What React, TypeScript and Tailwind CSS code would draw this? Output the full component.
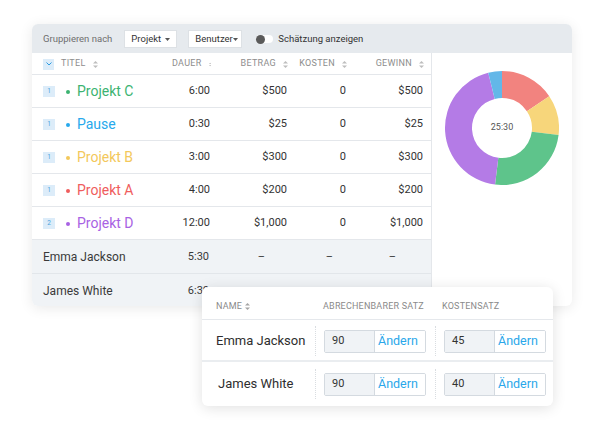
import React from "react";

const font = { fontFamily: "Roboto, 'Liberation Sans', sans-serif" };

type Project = { id: number; name: string; color: string; time: string; amount: string; cost: string; profit: string };

const projects: Project[] = [
  { id: 1, name: "Projekt C", color: "text-[#3cb371]", time: "6:00", amount: "$500", cost: "0", profit: "$500" },
  { id: 1, name: "Pause", color: "text-[#27a9ec]", time: "0:30", amount: "$25", cost: "0", profit: "$25" },
  { id: 1, name: "Projekt B", color: "text-[#f3c85b]", time: "3:00", amount: "$300", cost: "0", profit: "$300" },
  { id: 1, name: "Projekt A", color: "text-[#ef5d5d]", time: "4:00", amount: "$200", cost: "0", profit: "$200" },
  { id: 2, name: "Projekt D", color: "text-[#a862e3]", time: "12:00", amount: "$1,000", cost: "0", profit: "$1,000" },
];

const dotColors = ["bg-[#3cb371]", "bg-[#27a9ec]", "bg-[#f3c85b]", "bg-[#ef5d5d]", "bg-[#a862e3]"];

const people = [
  { name: "Emma Jackson", time: "5:30" },
  { name: "James White", time: "6:30" },
];

const slices = [
  { from: 0, to: 56, color: "#f2837f" },
  { from: 56, to: 97, color: "#f7d67b" },
  { from: 97, to: 187, color: "#5ec48b" },
  { from: 187, to: 346, color: "#b47be6" },
  { from: 346, to: 360, color: "#63b7e8" },
];

function pt(cx: number, cy: number, r: number, deg: number) {
  const a = ((deg - 90) * Math.PI) / 180;
  return [cx + r * Math.cos(a), cy + r * Math.sin(a)];
}

function arc(from: number, to: number, ro: number, ri: number) {
  const c = ro;
  const large = to - from > 180 ? 1 : 0;
  const [x1, y1] = pt(c, c, ro, from);
  const [x2, y2] = pt(c, c, ro, to);
  const [x3, y3] = pt(c, c, ri, to);
  const [x4, y4] = pt(c, c, ri, from);
  return `M${x1} ${y1} A${ro} ${ro} 0 ${large} 1 ${x2} ${y2} L${x3} ${y3} A${ri} ${ri} 0 ${large} 0 ${x4} ${y4} Z`;
}

function SortIcon() {
  return (
    <svg width="5" height="7" viewBox="0 0 5 7" className="ml-[7px] inline-block">
      <path d="M2.5 0 L5 2.6 H0 Z" fill="#bdbdbd" />
      <path d="M2.5 7 L5 4.4 H0 Z" fill="#bdbdbd" />
    </svg>
  );
}

function Caret() {
  return (
    <svg width="5" height="3" viewBox="0 0 5 3">
      <path d="M0 0 H5 L2.5 3 Z" fill="#555" />
    </svg>
  );
}

function RateInput({ value }: { value: string }) {
  return (
    <div className="flex h-[23px] w-[102px] border border-[#d4dae0] rounded-[2px] overflow-hidden">
      <div className="w-[50px] bg-[#f0f3f6] border-r border-[#d4dae0] flex items-center pl-[7px] text-[11px] text-[#333]">
        {value}
      </div>
      <div className="flex-1 bg-white flex items-center pl-[3px] text-[12.5px] text-[#2aa7ea]">Ändern</div>
    </div>
  );
}

export default function App() {
  return (
    <div className="relative w-[604px] h-[430px] bg-white overflow-hidden" style={font}>
      <div className="ml-[32px] mt-[24px] w-[540px] h-[282px] rounded-[6px] overflow-hidden bg-white shadow-[0_2px_14px_rgba(0,0,0,0.09)] flex flex-col">
        {/* toolbar */}
        <div className="h-[29px] shrink-0 bg-[#e6eaee] flex items-center pl-[11px] pt-[1px] text-[9.5px]">
          <span className="text-[#6f6f6f]">Gruppieren nach</span>
          <div className="ml-[12px] h-[18px] w-[53px] bg-white border border-[#dde1e5] flex items-center justify-between pl-[6px] pr-[6px] text-[#333]">
            <span>Projekt</span>
            <Caret />
          </div>
          <div className="ml-[11px] h-[18px] w-[54px] bg-white border border-[#dde1e5] flex items-center pl-[6px] text-[#333]">
            <span>Benutzer</span>
            <Caret />
          </div>
          <div className="ml-[14px] w-[17px] h-[8px] rounded-full bg-white relative">
            <div className="absolute left-0 top-[-0.5px] w-[9px] h-[9px] rounded-full bg-[#5a5a5a]" />
          </div>
          <span className="ml-[5px] text-[#333]">Schätzung anzeigen</span>
        </div>

        <div className="flex flex-1">
          {/* table */}
          <div className="w-[400px] border-r border-[#e4e7eb] flex flex-col">
            <div className="h-[22px] shrink-0 grid grid-cols-[140px_39px_77px_59px_77px] items-center pt-[1px] text-[9px] text-[#8d8d8d] tracking-[0.3px] border-b border-[#e4e7eb]">
              <div className="flex items-center pl-[11px]">
                <div className="w-[11px] h-[11px] bg-[#dcecf9] flex items-center justify-center">
                  <svg width="6" height="4" viewBox="0 0 6 4">
                    <path d="M0.5 0.5 L3 3 L5.5 0.5" stroke="#2d9be0" strokeWidth="1" fill="none" />
                  </svg>
                </div>
                <span className="ml-[7px]">TITEL</span>
                <SortIcon />
              </div>
              <div className="flex items-center justify-end">DAUER<SortIcon /></div>
              <div className="flex items-center justify-end">BETRAG<SortIcon /></div>
              <div className="flex items-center justify-end">KOSTEN<SortIcon /></div>
              <div className="flex items-center justify-end">GEWINN<SortIcon /></div>
            </div>

            {projects.map((p, i) => (
              <div
                key={p.name}
                className="h-[33px] shrink-0 grid grid-cols-[140px_39px_77px_59px_77px] items-center pt-[1px] border-b border-[#e4e7eb] text-[11px] text-[#333]"
              >
                <div className="flex items-center pl-[11px]">
                  <div className="w-[12px] h-[11px] bg-[#dcecf9] text-[#4aa3dc] text-[6.5px] flex items-center justify-center">
                    {p.id}
                  </div>
                  <div className={`ml-[11px] w-[4px] h-[4px] rounded-full ${dotColors[i]}`} />
                  <span className={`ml-[7px] text-[14px] ${p.color}`}>{p.name}</span>
                </div>
                <div className="text-right pr-[1px]">{p.time}</div>
                <div className="text-right pr-[1px]">{p.amount}</div>
                <div className="text-right pr-[1px]">{p.cost}</div>
                <div className="text-right pr-[1px]">{p.profit}</div>
              </div>
            ))}

            {people.map((u, i) => (
              <div
                key={u.name}
                className={`flex-1 grid grid-cols-[140px_39px_77px_59px_77px] items-center pt-[2px] bg-[#f0f3f6] text-[#3a3a3a] ${i === 0 ? "border-b border-[#e2e6ea]" : ""}`}
              >
                <div className="pl-[11px] text-[12px]">{u.name}</div>
                <div className="text-right pr-[2px] text-[11px]">{u.time}</div>
                <div className="text-right pr-[23px] text-[11px]">–</div>
                <div className="text-right pr-[14px] text-[11px]">–</div>
                <div className="text-right pr-[28px] text-[11px]">–</div>
              </div>
            ))}
          </div>

          {/* chart */}
          <div className="flex-1 flex justify-center pt-[18px]">
            <div className="relative w-[114px] h-[114px]">
              <svg width="114" height="114" viewBox="0 0 114 114">
                {slices.map((s) => (
                  <path key={s.color} d={arc(s.from, s.to, 57, 30)} fill={s.color} />
                ))}
              </svg>
              <div className="absolute inset-0 flex items-center justify-center text-[9px] text-[#555]">25:30</div>
            </div>
          </div>
        </div>
      </div>

      {/* rates popup */}
      <div className="absolute left-[202px] top-[287px] w-[351px] h-[119px] rounded-[6px] bg-white shadow-[0_2px_14px_rgba(0,0,0,0.12)] flex flex-col overflow-hidden">
        <div className="h-[33px] shrink-0 flex items-center pt-[7px] border-b border-[#e5e8ec] text-[9px] text-[#8a8a8a] tracking-[0.2px]">
          <div className="w-[121px] pl-[14px] flex items-center">
            NAME
            <svg width="5" height="7" viewBox="0 0 5 7" className="ml-[3px]">
              <path d="M2.5 0 L5 2.6 H0 Z" fill="#a5a5a5" />
              <path d="M2.5 7 L5 4.4 H0 Z" fill="#a5a5a5" />
            </svg>
          </div>
          <div className="w-[119px]">ABRECHENBARER SATZ</div>
          <div>KOSTENSATZ</div>
        </div>
        {[
          { name: "Emma Jackson", a: "90", b: "45" },
          { name: "James White", a: "90", b: "40" },
        ].map((r, i) => (
          <div
            key={r.name}
            className={`flex items-center ${i === 0 ? "h-[42px] shrink-0 pt-[2px] border-b-2 border-[#eaedf0]" : "flex-1"}`}
          >
            <div className={`w-[113px] text-[13px] text-[#2e2e2e] ${i === 0 ? "pl-[14px]" : "pl-[16px]"}`}>{r.name}</div>
            <div className="h-[30px] border-l border-dotted border-[#d9dde1]" />
            <div className="ml-[8px]">
              <RateInput value={r.a} />
            </div>
            <div className="ml-[9px] h-[30px] border-l border-dotted border-[#d9dde1]" />
            <div className="ml-[8px]">
              <RateInput value={r.b} />
            </div>
          </div>
        ))}
      </div>
    </div>
  );
}
